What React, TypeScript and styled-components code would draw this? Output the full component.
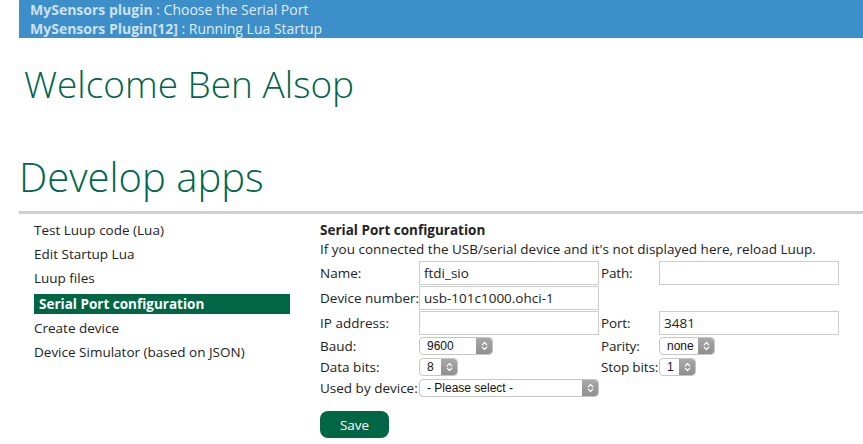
import React, { FC } from 'react';
import styled, { createGlobalStyle } from 'styled-components';

const GlobalStyle = createGlobalStyle`
  html, body {
    margin: 0;
    padding: 0;
    background: #fff;
  }
  body {
    font-family: 'Open Sans', 'Noto Sans', sans-serif;
    font-size: 13.5px;
    color: #222;
    width: 863px;
    overflow: hidden;
  }
`;

const menuItems = [
  'Test Luup code (Lua)',
  'Edit Startup Lua',
  'Luup files',
  'Serial Port configuration',
  'Create device',
  'Device Simulator (based on JSON)',
];

const Chevrons: FC = () => (
  <svg width="7" height="10" viewBox="0 0 7 10" fill="none" stroke="#fff" strokeWidth="1.2" strokeLinecap="round" strokeLinejoin="round">
    <path d="M1.2 3.8 L3.5 1.5 L5.8 3.8" />
    <path d="M1.2 6.2 L3.5 8.5 L5.8 6.2" />
  </svg>
);

const Select: FC<{ width: number; value: string }> = ({ width, value }) => (
  <SelectBox $width={width}>
    <NativeSelect defaultValue={value}>
      <option>{value}</option>
    </NativeSelect>
    <Stepper>
      <Chevrons />
    </Stepper>
  </SelectBox>
);

const App: FC = () => {
  return (
    <Page>
      <GlobalStyle />
      <Notice>
        <NoticeLine>
          <b>MySensors plugin</b> : Choose the Serial Port
        </NoticeLine>
        <NoticeLine>
          <b>MySensors Plugin[12]</b> : Running Lua Startup
        </NoticeLine>
      </Notice>

      <Welcome>Welcome Ben Alsop</Welcome>
      <Title>Develop apps</Title>
      <Divider />

      <Content>
        <Menu>
          {menuItems.map((item) => (
            <MenuItem key={item} $active={item === 'Serial Port configuration'}>
              {item}
            </MenuItem>
          ))}
        </Menu>

        <Panel>
          <PanelTitle>Serial Port configuration</PanelTitle>
          <Hint>If you connected the USB/serial device and it's not displayed here, reload Luup.</Hint>

          <Form>
            <Label>Name:</Label>
            <TextInput defaultValue="ftdi_sio" />
            <Label $second>Path:</Label>
            <TextInput defaultValue="" />

            <Label>Device number:</Label>
            <TextInput defaultValue="usb-101c1000.ohci-1" />
            <Empty />
            <Empty />

            <Label>IP address:</Label>
            <TextInput defaultValue="" />
            <Label $second>Port:</Label>
            <TextInput defaultValue="3481" />

            <Label $short>Baud:</Label>
            <Cell>
              <Select width={74} value="9600" />
            </Cell>
            <Label $second $short>Parity:</Label>
            <Cell>
              <Select width={56} value="none" />
            </Cell>

            <Label $short>Data bits:</Label>
            <Cell>
              <Select width={39} value="8" />
            </Cell>
            <Label $second $short>Stop bits:</Label>
            <Cell>
              <Select width={37} value="1" />
            </Cell>

            <Label $short>Used by device:</Label>
            <Cell>
              <Select width={180} value="- Please select -" />
            </Cell>
            <Empty />
            <Empty />
          </Form>

          <SaveButton>Save</SaveButton>
        </Panel>
      </Content>
    </Page>
  );
};

export default App;

const Page = styled.div`
  width: 863px;
  height: 444px;
  overflow: hidden;
`;

const Notice = styled.div`
  margin-left: 19px;
  height: 38px;
  padding-left: 11px;
  background-color: #3c8fc9;
  color: rgba(255, 255, 255, 0.86);
  font-size: 14px;
  line-height: 19px;
  overflow: hidden;

  b {
    font-weight: 700;
    color: rgba(240, 244, 248, 0.82);
  }
`;

const NoticeLine = styled.div`
  white-space: nowrap;
`;

const Welcome = styled.h1`
  margin: 21px 0 0 24px;
  font-size: 37px;
  font-weight: 300;
  line-height: 49px;
  color: #00664a;
`;

const Title = styled.h2`
  margin: 42px 0 0 19px;
  font-size: 40px;
  font-weight: 300;
  line-height: 54px;
  color: #00664a;
`;

const Divider = styled.div`
  margin: 7px 0 0 19px;
  height: 3px;
  background-color: #d2cfcf;
`;

const Content = styled.div`
  display: flex;
  column-gap: 30px;
  padding: 4px 0 0 34px;
`;

const Menu = styled.ul`
  width: 256px;
  margin: 0;
  padding: 0;
  list-style: none;
`;

const MenuItem = styled.li<{ $active?: boolean }>`
  font-size: 13.5px;
  line-height: ${({ $active }) => ($active ? '20px' : '24px')};
  color: ${({ $active }) => ($active ? '#fff' : '#222')};
  font-weight: ${({ $active }) => ($active ? 700 : 400)};
  background-color: ${({ $active }) => ($active ? '#006644' : 'transparent')};
  padding-left: ${({ $active }) => ($active ? '5px' : '0')};
  margin: ${({ $active }) => ($active ? '4px 0 2px' : '0')};
  white-space: nowrap;
`;

const Panel = styled.section`
  flex: 1;
  padding-top: 3px;
`;

const PanelTitle = styled.h3`
  margin: 0;
  font-size: 13.5px;
  font-weight: 700;
  line-height: 19px;
  color: #222;
`;

const Hint = styled.p`
  margin: 0;
  font-size: 13.5px;
  line-height: 19px;
  color: #222;
  white-space: nowrap;
`;

const Form = styled.div`
  display: grid;
  grid-template-columns: 99px 180px 60px 180px;
  row-gap: 1px;
  margin-top: 2px;
`;

const Label = styled.div<{ $second?: boolean; $short?: boolean }>`
  position: relative;
  z-index: 1;
  display: flex;
  align-items: center;
  height: ${({ $short }) => ($short ? '20px' : '24px')};
  padding-left: ${({ $second }) => ($second ? '2px' : '0')};
  letter-spacing: ${({ $second }) => ($second ? '-0.15px' : '0')};
  font-size: 13.5px;
  color: #222;
  white-space: nowrap;
`;

const TextInput = styled.input`
  box-sizing: border-box;
  width: 180px;
  height: 24px;
  margin: 0;
  padding: 0 4px;
  border: 1px solid #cccccc;
  border-radius: 0;
  outline: none;
  font-family: 'Open Sans', 'Noto Sans', sans-serif;
  font-size: 13.5px;
  color: #222;
  background: #fff;
`;

const Cell = styled.div`
  display: flex;
  align-items: center;
  height: 20px;
`;

const Empty = styled.div``;

const SelectBox = styled.span<{ $width: number }>`
  box-sizing: border-box;
  display: inline-flex;
  width: ${({ $width }) => $width}px;
  height: 18px;
  border: 1px solid #c6c6c6;
  border-radius: 4px;
  background: #fff;
  overflow: hidden;
`;

const NativeSelect = styled.select`
  flex: 1;
  min-width: 0;
  appearance: none;
  -webkit-appearance: none;
  border: none;
  outline: none;
  background: transparent;
  margin: 0;
  padding: 0 0 0 7px;
  font-family: 'Liberation Sans', Arial, sans-serif;
  font-size: 12px;
  line-height: 16px;
  color: #111;
`;

const Stepper = styled.span`
  display: flex;
  align-items: center;
  justify-content: center;
  width: 16px;
  flex-shrink: 0;
  border-radius: 0 3px 3px 0;
  background: linear-gradient(#a8a8a8, #8f8f8f);
`;

const SaveButton = styled.button`
  display: block;
  width: 69px;
  height: 27px;
  margin-top: 13px;
  padding: 0;
  border: none;
  border-radius: 8px;
  background-color: #006644;
  color: #fff;
  font-family: 'Open Sans', 'Noto Sans', sans-serif;
  font-size: 13.5px;
  cursor: pointer;
`;
